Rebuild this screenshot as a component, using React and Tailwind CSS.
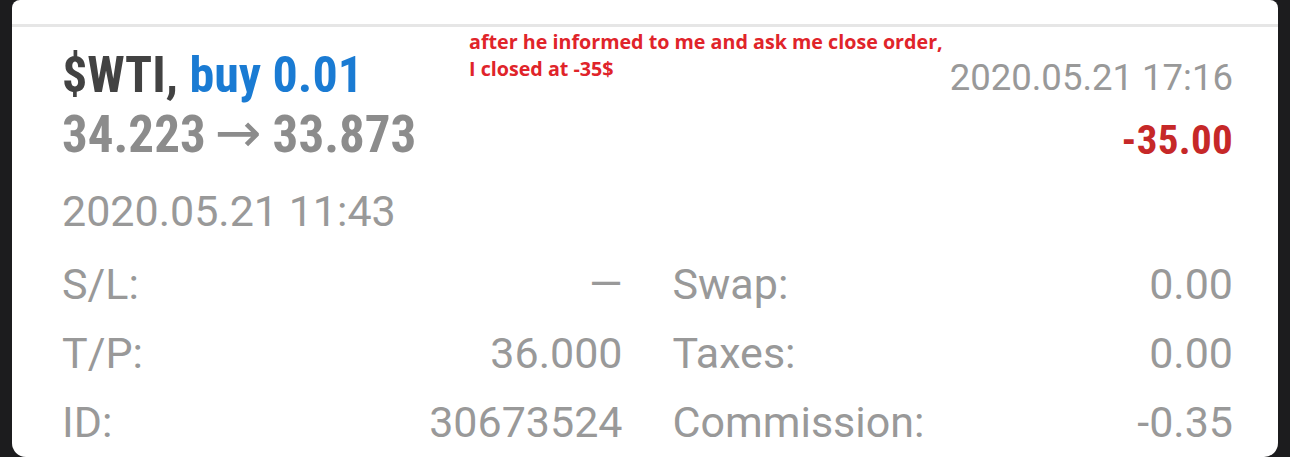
export default function App() {
  const cond = {
    fontFamily: '"Roboto Condensed", "Liberation Sans Narrow", "DejaVu Sans Condensed", Roboto, sans-serif',
  };
  const rows = [
    ["S/L:", "—", "Swap:", "0.00"],
    ["T/P:", "36.000", "Taxes:", "0.00"],
    ["ID:", "30673524", "Commission:", "-0.35"],
  ];
  return (
    <div className="w-[1290px] h-[457px] bg-[#1c1c1e] px-[12px] flex overflow-hidden font-['Roboto',sans-serif]">
      <div className="relative flex-1 h-[457px] bg-white rounded-t-[8px] rounded-b-[14px] overflow-hidden">
        <div className="h-[24px]" />
        <div className="h-[3px] bg-[#e6e6e6]" />

        <div className="pl-[50px] pr-[45px]">
          {/* order header */}
          <div className="flex justify-between pt-[19px] font-bold" style={cond}>
            <div>
              <div className="text-[50px] leading-[58px] text-[#424242]">
                $WTI, <span className="text-[#1a7bd3]">buy 0.01</span>
              </div>
              <div className="text-[51px] leading-[58px] text-[#8c8c8c] flex items-baseline">
                <span>34.223</span>
                <span className="ml-[9px] mr-[11px] font-normal text-[56px] font-['DejaVu_Sans',sans-serif]">→</span>
                <span>33.873</span>
              </div>
            </div>
            <div className="text-right">
              <div className="text-[36.5px] leading-[63px] font-normal text-[#999999] font-['Roboto',sans-serif]">
                2020.05.21 17:16
              </div>
              <div className="text-[41px] leading-[62px] text-[#c62828] tracking-[0.3px]">-35.00</div>
            </div>
          </div>

          {/* details */}
          <div className="mt-[6px] text-[43px] leading-[69px] text-[#999999]">
            <div>2020.05.21 11:43</div>
            <div className="mt-[4px] grid grid-cols-2 gap-x-[50px]">
              {rows.map(([l1, v1, l2, v2]) => (
                <div key={l1} className="contents">
                  <div className="flex justify-between">
                    <span>{l1}</span>
                    <span>{v1}</span>
                  </div>
                  <div className="flex justify-between">
                    <span>{l2}</span>
                    <span>{v2}</span>
                  </div>
                </div>
              ))}
            </div>
          </div>
        </div>

        {/* annotation note */}
        <div className="absolute left-[457px] top-[28px] text-[19.7px] leading-[27px] font-bold text-[#e0242a] font-['Open_Sans',sans-serif]">
          <div>after he informed to me and ask me close order,</div>
          <div>I closed at -35$</div>
        </div>
      </div>
    </div>
  );
}
